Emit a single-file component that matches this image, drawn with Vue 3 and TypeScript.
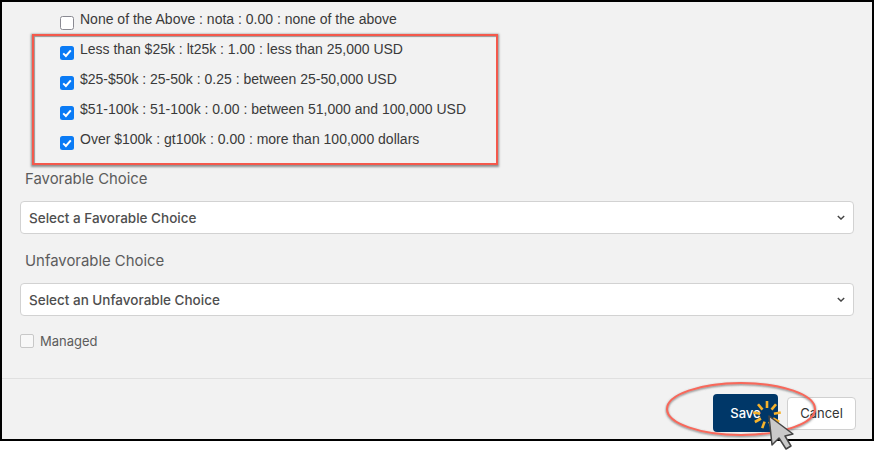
<script setup lang="ts">
const choices = [
  { label: 'None of the Above : nota : 0.00 : none of the above', checked: false },
  { label: 'Less than $25k : lt25k : 1.00 : less than 25,000 USD', checked: true },
  { label: '$25-$50k : 25-50k : 0.25 : between 25-50,000 USD', checked: true },
  { label: '$51-100k : 51-100k : 0.00 : between 51,000 and 100,000 USD', checked: true },
  { label: 'Over $100k : gt100k : 0.00 : more than 100,000 dollars', checked: true },
]
const selects = [
  { label: 'Favorable Choice', placeholder: 'Select a Favorable Choice' },
  { label: 'Unfavorable Choice', placeholder: 'Select an Unfavorable Choice' },
]
// sunburst ticks round the cursor tip
const rays = [0, 40, 80, 120, 160, 200, 240, 280, 320]
</script>

<template>
  <div class="page">
    <div class="panel">
      <div class="body">
        <ul class="choices">
          <li v-for="c in choices" :key="c.label" class="choice">
            <span class="box" :class="{ on: c.checked }">
              <svg v-if="c.checked" viewBox="0 0 14 14" width="14" height="14">
                <path d="M3.2 7.4 L5.9 10 L10.8 4.4" fill="none" stroke="#fff" stroke-width="2" />
              </svg>
            </span>
            <span>{{ c.label }}</span>
          </li>
        </ul>
        <div v-for="s in selects" :key="s.label" class="field">
          <div class="field-label">{{ s.label }}</div>
          <div class="select">
            <span>{{ s.placeholder }}</span>
            <svg viewBox="0 0 10 6" width="8" height="5">
              <path d="M1 1 L5 5 L9 1" fill="none" stroke="#444" stroke-width="1.7" />
            </svg>
          </div>
        </div>
        <div class="managed">
          <span class="plain-box"></span>
          <span>Managed</span>
        </div>
      </div>
      <div class="footer">
        <button class="save">Save</button>
        <button class="cancel">Cancel</button>
      </div>
    </div>

    <!-- annotations drawn on top of the screenshot -->
    <div class="highlight"></div>
    <svg class="overlay" width="874" height="467" viewBox="0 0 874 467">
      <defs>
        <filter id="sh" x="-10%" y="-20%" width="120%" height="140%">
          <feDropShadow dx="0" dy="1" stdDeviation="1" flood-color="#555" flood-opacity="0.8" />
        </filter>
      </defs>
      <ellipse cx="741" cy="409" rx="74" ry="26" fill="none" stroke="#f8675a" stroke-width="2" filter="url(#sh)" />
      <g stroke="#f7b32b" stroke-width="2.6">
        <line
          v-for="a in rays"
          :key="a"
          x1="0" y1="-7" x2="0" y2="-14"
          :transform="`translate(767 415) rotate(${a})`"
        />
      </g>
      <path
        d="M769 416 L772 445 L779 438 L786 449 L791 446 L785 436 L793 434 Z"
        fill="#c9c9c9" stroke="#444" stroke-width="1.5" stroke-linejoin="round"
      />
    </svg>
  </div>
</template>

<style>
html, body { margin: 0; background: #fff; }
</style>

<style scoped>
.page {
  position: relative;
  width: 874px;
  height: 467px;
  overflow: hidden;
  background: #fff;
}
.panel {
  box-sizing: border-box;
  width: 874px;
  height: 441px;
  border: 2px solid #000;
  background: #f2f2f2;
  display: flex;
  flex-direction: column;
}
.body {
  flex: 1;
  padding: 0 18px;
}
.choices {
  list-style: none;
  margin: 0 0 15px;
  padding: 2px 0 0 40px;
  font: 14px "Liberation Sans", Arial, sans-serif;
  color: #3a3a3a;
}
.choice {
  height: 30px;
  display: flex;
  align-items: center;
  gap: 6px;
}
.box {
  box-sizing: border-box;
  width: 14px;
  height: 14px;
  margin-top: 7px;
  border: 1px solid #8a8a92;
  border-radius: 2.5px;
  background: #fff;
  display: flex;
}
.box.on {
  border: 0;
  background: #0a7bf5;
}
.field-label {
  font: 14.9px/20px Inter, sans-serif;
  color: #5c5c5c;
  padding: 0 0 0 5px;
  margin-bottom: 12px;
}
.field {
  margin-bottom: 17px;
}
.select {
  box-sizing: border-box;
  height: 33px;
  padding: 0 8px;
  background: #fff;
  border: 1px solid #d2d2d2;
  border-radius: 4px;
  display: flex;
  align-items: center;
  justify-content: space-between;
  font: 500 13.5px Inter, sans-serif;
  color: #4e4e4e;
}
.managed {
  display: flex;
  align-items: center;
  gap: 6px;
  margin-top: 1px;
  font: 13px Inter, sans-serif;
  color: #5c5c5c;
}
.plain-box {
  box-sizing: border-box;
  width: 14px;
  height: 14px;
  border: 1px solid #c8c8c8;
  border-radius: 2px;
  background: #f8f8f8;
}
.footer {
  box-sizing: border-box;
  height: 61px;
  border-top: 1px solid #e0e0e0;
  display: flex;
  align-items: center;
  justify-content: flex-end;
  gap: 9px;
  padding: 8px 16px 0 0;
}
.save {
  width: 65px;
  height: 38px;
  border: 0;
  border-radius: 4px;
  background: #003768;
  color: #fff;
  font: 500 13px Inter, sans-serif;
}
.cancel {
  width: 69px;
  height: 33px;
  border: 1px solid #d0d0d0;
  border-radius: 4px;
  background: #fff;
  color: #333;
  font: 13px Inter, sans-serif;
}
.highlight {
  position: absolute;
  left: 32px;
  top: 34px;
  width: 462px;
  height: 127px;
  border: 2px solid #f4594c;
  box-shadow: 0 1px 2px 1px rgba(60, 60, 60, 0.55), inset 1px 1px 1px rgba(60, 60, 60, 0.5);
}
.overlay {
  position: absolute;
  left: 0;
  top: 0;
}
</style>
